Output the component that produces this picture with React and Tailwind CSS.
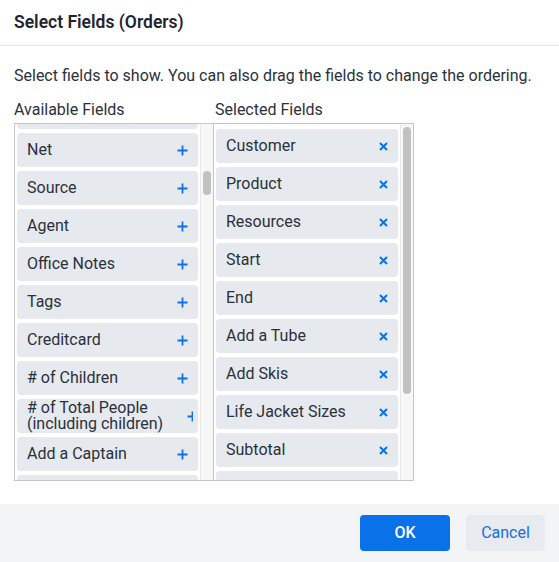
import React from "react";

const FONT = { fontFamily: "Roboto, 'Liberation Sans', sans-serif" };

// first and last entries are scrolled almost out of view
const available = [
  "",
  "Net",
  "Source",
  "Agent",
  "Office Notes",
  "Tags",
  "Creditcard",
  "# of Children",
  "# of Total People (including children)",
  "Add a Captain",
  "",
];

const selected = [
  "Customer",
  "Product",
  "Resources",
  "Start",
  "End",
  "Add a Tube",
  "Add Skis",
  "Life Jacket Sizes",
  "Subtotal",
  "",
];

const PlusIcon = () => (
  <svg width="11" height="11" viewBox="0 0 11 11" className="shrink-0">
    <path d="M5.5 0.5v10M0.5 5.5h10" stroke="#0b72e7" strokeWidth="1.8" />
  </svg>
);

const XIcon = () => (
  <svg width="9" height="9" viewBox="0 0 9 9" className="shrink-0">
    <path d="M1 1l7 7M8 1l-7 7" stroke="#0b72e7" strokeWidth="2" />
  </svg>
);

const FieldItem = ({ label, icon, clipped }) => (
  <div className="flex h-[34px] shrink-0 items-center justify-between overflow-hidden rounded bg-[#e6e9ee] pl-[10px] pr-[10px] text-[16px] leading-[16px] text-[#2b313c]">
    <span className={clipped ? "w-[150px] shrink-0" : ""}>{label}</span>
    {clipped ? (
      <span className="-mr-[5px] ml-auto w-[6px] overflow-hidden">
        <PlusIcon />
      </span>
    ) : (
      label && icon
    )}
  </div>
);

const ScrollTrack = ({ thumbTop, thumbHeight }) => (
  <div className="flex w-[13px] shrink-0 justify-center border-l border-[#e8e8e8] bg-[#f7f7f7]">
    <div
      className="w-[8px] rounded-full bg-[#c1c1c1]"
      style={{ marginTop: thumbTop, height: thumbHeight }}
    />
  </div>
);

export default function App() {
  return (
    <div className="flex h-[562px] w-[559px] flex-col bg-white" style={FONT}>
      <div className="flex h-[46px] items-center border-b border-[#e3e5e8] px-[14px]">
        <h1 className="text-[17.5px] font-semibold text-[#1f2530]">
          Select Fields (Orders)
        </h1>
      </div>

      <div className="flex-1 px-[14px] pt-[18px]">
        <p className="whitespace-nowrap text-[16px] leading-6 text-[#2b313c]">
          Select fields to show. You can also drag the fields to change the
          ordering.
        </p>
        <div className="mt-[10px] flex text-[16px] leading-6 text-[#2b313c]">
          <div className="w-[201px]">Available Fields</div>
          <div>Selected Fields</div>
        </div>

        <div className="mt-px flex h-[358px] w-[400px] border border-[#c6c6c6]">
          <div className="flex w-[199px] border-r border-[#c6c6c6]">
            <div className="flex-1 overflow-hidden px-[2px]">
              <div className="-mt-[34px] flex flex-col gap-[4px] pt-[5px]">
                {available.map((f, i) => (
                  <FieldItem
                    key={i}
                    label={f}
                    icon={<PlusIcon />}
                    clipped={f.startsWith("# of Total")}
                  />
                ))}
              </div>
            </div>
            <ScrollTrack thumbTop={47} thumbHeight={24} />
          </div>

          <div className="flex flex-1">
            <div className="flex-1 overflow-hidden px-[2px]">
              <div className="flex flex-col gap-[4px] pt-[5px]">
                {selected.map((f, i) => (
                  <FieldItem key={i} label={f} icon={<XIcon />} />
                ))}
              </div>
            </div>
            <ScrollTrack thumbTop={3} thumbHeight={267} />
          </div>
        </div>
      </div>

      <div className="flex h-[58px] items-center justify-end gap-4 bg-[#f3f4f6] px-[14px]">
        <button className="h-9 w-[90px] rounded bg-[#0a72e8] text-[16px] font-medium text-white">
          OK
        </button>
        <button className="h-9 w-[79px] rounded bg-[#e7eaee] text-[16px] text-[#1570e0]">
          Cancel
        </button>
      </div>
    </div>
  );
}
